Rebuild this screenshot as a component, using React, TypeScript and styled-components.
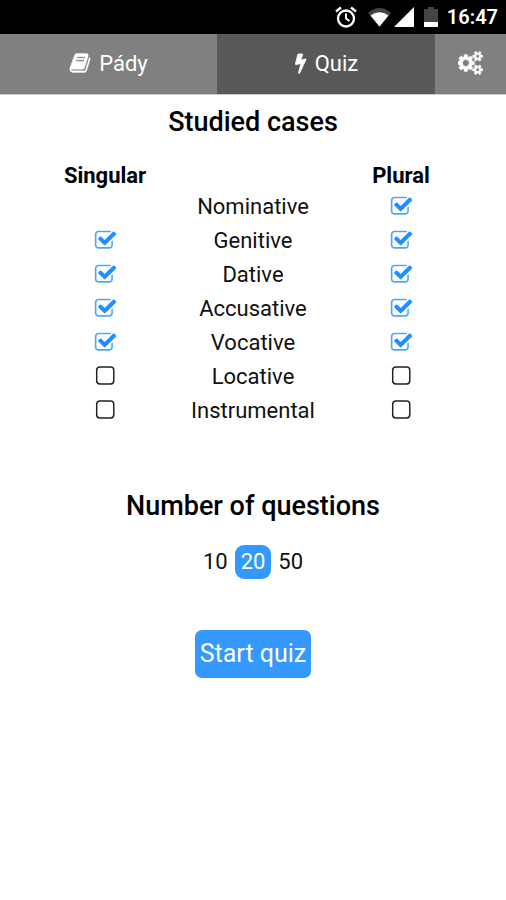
import React, { useState } from "react";
import styled, { createGlobalStyle } from "styled-components";

const GlobalStyle = createGlobalStyle`
  * { box-sizing: border-box; }
  body { margin: 0; background: #fff; font-family: Roboto, sans-serif; color: #111; }
  button, input { font: inherit; }
  button { cursor: pointer; }
  svg { display: block; flex: none; }
`;

const StatusBar = styled.header`
  height: 34px;
  padding: 0 8px;
  background: #000;
  color: #fff;
  display: flex;
  align-items: center;
  justify-content: flex-end;
  gap: 9px;
  font-size: 20px;
  font-weight: 600;
`;

const StatusIcons = styled.div`
  display: flex;
  align-items: center;
  gap: 10px;
`;

const Signals = styled.div`
  display: flex;
  align-items: center;
  gap: 2px;
`;

const Nav = styled.nav`
  display: grid;
  grid-template-columns: 217fr 218fr 71fr;
  height: 61px;
  border-bottom: 1px solid #ccc;
`;

const Tab = styled.button<{ $active?: boolean }>`
  border: 0;
  padding: 0 0 2px;
  background: ${(p) => (p.$active ? "#585858" : "#808080")};
  color: #fff;
  display: flex;
  align-items: center;
  justify-content: center;
  gap: 8px;
  font-size: 22px;
`;

const Main = styled.main`
  padding: 11px 31px;
  display: flex;
  flex-direction: column;
  align-items: center;
`;

const Title = styled.h2`
  margin: 0;
  font-size: 27px;
  line-height: 32px;
  font-weight: 500;
  color: #000;
`;

const Cases = styled.table`
  width: 100%;
  margin: 23px 0 63px;
  border-collapse: collapse;
  table-layout: fixed;
  font-size: 22px;
  text-align: center;
`;

const ColumnHead = styled.th`
  height: 28px;
  padding: 0;
  font-weight: 700;
  color: #000;
`;

const CaseName = styled.th`
  height: 34px;
  padding: 0;
  font-weight: 400;
`;

const CheckCell = styled.td`
  height: 34px;
  padding: 0;
`;

const CheckLabel = styled.label<{ $checked: boolean }>`
  position: relative;
  display: flex;
  width: 23px;
  margin: 0 auto;
  color: ${(p) => (p.$checked ? "#1e90ff" : "#222")};
  cursor: pointer;
`;

const CheckInput = styled.input`
  position: absolute;
  inset: 0;
  width: 100%;
  height: 100%;
  margin: 0;
  opacity: 0;
  cursor: pointer;
`;

const Options = styled.div`
  display: flex;
  gap: 7px;
  margin: 23px 0 51px;
`;

const Option = styled.button<{ $active: boolean }>`
  border: 0;
  padding: 0 ${(p) => (p.$active ? 6 : 0)}px 2px;
  height: 34px;
  border-radius: 9px;
  font-size: 22px;
  background: ${(p) => (p.$active ? "#3399ff" : "transparent")};
  color: ${(p) => (p.$active ? "#fff" : "#111")};
`;

const Start = styled.button`
  border: 0;
  border-radius: 7px;
  height: 48px;
  padding: 0 5px 2px;
  background: #3399ff;
  color: #fff;
  font-size: 25px;
`;

const BOOK =
  "M1703 478q40 57 18 129l-275 906q-19 64-76.5 107.5t-122.5 43.5h-923q-77 0-148.5-53.5t-99.5-131.5q-24-67-2-127 0-4 3-27t4-37q1-8-3-21.5t-3-19.5q2-11 8-21t16.5-23.5 16.5-23.5q23-38 45-91.5t30-91.5q3-10 .5-30t-.5-28q3-11 17-28t17-23q21-36 42-92t25-90q1-9-2.5-32t.5-28q4-13 22-30.5t22-22.5q19-26 42.5-84.5t27.5-96.5q1-8-3-25.5t-2-26.5q2-8 9-18t18-23 17-21q8-12 16.5-30.5t15-35 16-36 19.5-32 26.5-23.5 36-11.5 47.5 5.5l-1 3q38-9 51-9h761q74 0 114 56t18 130l-274 906q-36 119-71.5 153.5t-128.5 34.5h-869q-27 0-38 15-11 16-1 43 24 70 144 70h923q29 0 56-15.5t35-41.5l300-987q7-22 5-57 38 15 59 43zm-1064 2q-4 13 2 22.5t20 9.5h608q13 0 25.5-9.5t16.5-22.5l21-64q4-13-2-22.5t-20-9.5h-608q-13 0-25.5 9.5t-16.5 22.5zm-83 256q-4 13 2 22.5t20 9.5h608q13 0 25.5-9.5t16.5-22.5l21-64q4-13-2-22.5t-20-9.5h-608q-13 0-25.5 9.5t-16.5 22.5z";
const BOLT =
  "M1333 566q18 20 7 44l-540 1157q-13 25-42 25-4 0-14-2-17-5-25.5-19t-4.5-30l197-808-406 101q-4 1-12 1-18 0-31-11-18-15-13-39l201-825q4-14 16-23t28-9h328q19 0 32 12.5t13 29.5q0 8-5 18l-171 463 396-98q8-2 12-2 19 0 34 15z";
const COGS =
  "M832 896q0-106-75-181t-181-75-181 75-75 181 75 181 181 75 181-75 75-181zm768 512q0-52-38-90t-90-38-90 38-38 90q0 53 37.5 90.5t90.5 37.5 90.5-37.5 37.5-90.5zm0-1024q0-52-38-90t-90-38-90 38-38 90q0 53 37.5 90.5t90.5 37.5 90.5-37.5 37.5-90.5zm-384 421v185q0 10-7 19.5t-16 10.5l-155 24q-11 35-32 76 34 48 90 115 7 11 7 20 0 12-7 19-23 30-82.5 89.5t-78.5 59.5q-11 0-21-7l-115-90q-37 19-77 31-11 108-23 155-7 24-30 24h-186q-11 0-20-7.5t-10-17.5l-23-153q-34-10-75-31l-118 89q-7 7-20 7-11 0-21-8-144-133-144-160 0-9 7-19 10-14 41-53t47-61q-23-44-35-82l-152-24q-10-1-17-9.5t-7-19.5v-185q0-10 7-19.5t16-10.5l155-24q11-35 32-76-34-48-90-115-7-11-7-20 0-12 7-20 22-30 82-89t79-59q11 0 21 7l115 90q34-18 77-32 11-108 23-154 7-24 30-24h186q11 0 20 7.5t10 17.5l23 153q34 10 75 31l118-89q8-7 20-7 11 0 21 8 144 133 144 160 0 8-7 19-12 16-42 54t-45 60q23 48 34 82l152 23q10 2 17 10.5t7 19.5zm640 533v140q0 16-149 31-12 27-30 52 51 113 51 138 0 4-4 7-122 71-124 71-8 0-46-47t-52-68q-20 2-30 2t-30-2q-14 21-52 68t-46 47q-2 0-124-71-4-3-4-7 0-25 51-138-18-25-30-52-149-15-149-31v-140q0-16 149-31 13-29 30-52-51-113-51-138 0-4 4-7 4-2 35-20t59-34 30-16q8 0 46 46.5t52 67.5q20-2 30-2t30 2q51-71 92-112l6-2q4 0 124 70 4 3 4 7 0 25-51 138 17 23 30 52 149 15 149 31zm0-1024v140q0 16-149 31-12 27-30 52 51 113 51 138 0 4-4 7-122 71-124 71-8 0-46-47t-52-68q-20 2-30 2t-30-2q-14 21-52 68t-46 47q-2 0-124-71-4-3-4-7 0-25 51-138-18-25-30-52-149-15-149-31v-140q0-16 149-31 13-29 30-52-51-113-51-138 0-4 4-7 4-2 35-20t59-34 30-16q8 0 46 46.5t52 67.5q20-2 30-2t30 2q51-71 92-112l6-2q4 0 124 70 4 3 4 7 0 25-51 138 17 23 30 52 149 15 149 31z";
const CHECK_BOX =
  "M1472 930v318q0 119-84.5 203.5t-203.5 84.5h-832q-119 0-203.5-84.5t-84.5-203.5v-832q0-119 84.5-203.5t203.5-84.5h832q63 0 117 25 15 7 18 23 3 17-9 29l-49 49q-10 10-23 10-3 0-9-2-23-6-45-6h-832q-66 0-113 47t-47 113v832q0 66 47 113t113 47h832q66 0 113-47t47-113v-254q0-13 9-22l64-64q10-10 23-10 6 0 12 3 20 8 20 29z";
const CHECK_MARK =
  "M1703 441l-814 814q-24 24-57 24t-57-24l-430-430q-24-24-24-57t24-57l110-110q24-24 57-24t57 24l263 263 647-647q24-24 57-24t57 24l110 110q24 24 24 57t-24 57z";

function AlarmIcon() {
  return (
    <svg width="22" height="22" viewBox="0 0 22 22" fill="none" stroke="#fff" strokeWidth="2.3" aria-hidden="true">
      <circle cx="11" cy="12.5" r="8" />
      <path d="M1 5.5l5-4M21 5.5l-5-4" />
      <path d="M11 7.5v5l3.5 2.5" strokeWidth="2" />
    </svg>
  );
}

function WifiIcon() {
  return (
    <svg width="25" height="20" viewBox="0 0 25 20" aria-hidden="true">
      <path d="M1 6Q12.500-4 24 6L12.500 20z" fill="#444" />
      <path d="M3.500 8.500Q12.500 2 21.500 8.500L12.500 19.500z" fill="#fff" />
    </svg>
  );
}

function CellIcon() {
  return (
    <svg width="20" height="20" viewBox="0 0 20 20" aria-hidden="true">
      <path d="M20 0v20H0z" fill="#fff" />
    </svg>
  );
}

function BatteryIcon() {
  return (
    <svg width="14" height="20" viewBox="0 0 14 20" aria-hidden="true">
      <path d="M4 0h6v2h4v14H0V2h4z" fill="#444" />
      <path d="M0 15h14v5H0z" fill="#fff" />
    </svg>
  );
}

function CheckBox({ label, initial }: { label: string; initial: boolean }) {
  const [checked, setChecked] = useState(initial);
  return (
    <CheckLabel $checked={checked}>
      <CheckInput
        type="checkbox"
        aria-label={label}
        checked={checked}
        onChange={(e) => setChecked(e.target.checked)}
      />
      <svg width="23" height="23" viewBox="0 0 1792 1792" fill="currentColor" aria-hidden="true">
        {checked ? (
          <>
            <path d={CHECK_BOX} opacity="0.8" />
            <path d={CHECK_MARK} />
          </>
        ) : (
          <rect x="210" y="150" width="1332" height="1332" rx="250" fill="none" stroke="currentColor" strokeWidth="115" />
        )}
      </svg>
    </CheckLabel>
  );
}

const CASES: { name: string; singular?: boolean; plural: boolean }[] = [
  { name: "Nominative", plural: true },
  { name: "Genitive", singular: true, plural: true },
  { name: "Dative", singular: true, plural: true },
  { name: "Accusative", singular: true, plural: true },
  { name: "Vocative", singular: true, plural: true },
  { name: "Locative", singular: false, plural: false },
  { name: "Instrumental", singular: false, plural: false },
];

export default function App() {
  const [count, setCount] = useState(20);
  return (
    <>
      <GlobalStyle />
      <StatusBar>
        <StatusIcons>
          <AlarmIcon />
          <Signals>
            <WifiIcon />
            <CellIcon />
          </Signals>
          <BatteryIcon />
        </StatusIcons>
        <span>16:47</span>
      </StatusBar>
      <Nav>
        <Tab>
          <svg width="22" height="22" viewBox="0 0 1792 1792" fill="currentColor" stroke="currentColor" strokeWidth="30" aria-hidden="true"><path d={BOOK} /></svg>
          Pády
        </Tab>
        <Tab $active>
          <svg width="13" height="22" viewBox="368 -40 1017 1872" fill="currentColor" stroke="currentColor" strokeWidth="70" aria-hidden="true"><path d={BOLT} /></svg>
          Quiz
        </Tab>
        <Tab aria-label="Settings">
          <svg width="25" height="24" viewBox="-20 0 1896 1792" fill="currentColor" stroke="currentColor" strokeWidth="40" aria-hidden="true"><path d={COGS} /></svg>
        </Tab>
      </Nav>
      <Main>
        <Title>Studied cases</Title>
        <Cases>
          <thead>
            <tr>
              <ColumnHead scope="col">Singular</ColumnHead>
              <ColumnHead />
              <ColumnHead scope="col">Plural</ColumnHead>
            </tr>
          </thead>
          <tbody>
            {CASES.map((c) => (
              <tr key={c.name}>
                <CheckCell>
                  {c.singular !== undefined && <CheckBox label={`${c.name} singular`} initial={c.singular} />}
                </CheckCell>
                <CaseName scope="row">{c.name}</CaseName>
                <CheckCell>
                  <CheckBox label={`${c.name} plural`} initial={c.plural} />
                </CheckCell>
              </tr>
            ))}
          </tbody>
        </Cases>
        <Title>Number of questions</Title>
        <Options>
          {[10, 20, 50].map((n) => (
            <Option key={n} $active={n === count} aria-pressed={n === count} onClick={() => setCount(n)}>
              {n}
            </Option>
          ))}
        </Options>
        <Start>Start quiz</Start>
      </Main>
    </>
  );
}
